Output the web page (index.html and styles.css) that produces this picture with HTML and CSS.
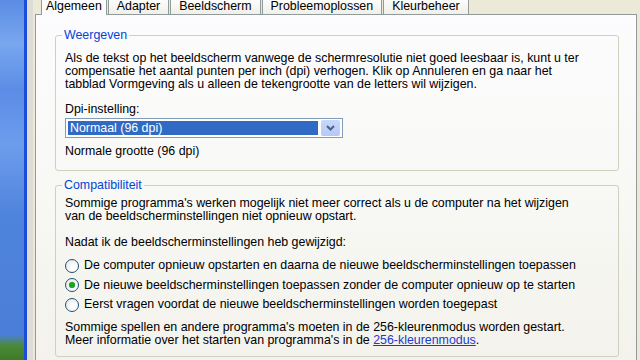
FILE: index.html
```html
<!DOCTYPE html>
<html lang="nl">
<head>
  <meta charset="UTF-8" />
  <meta name="viewport" content="width=device-width, initial-scale=1" />
  <title>Eigenschappen voor Beeldscherm - Algemeen</title>
  <link rel="stylesheet" href="styles.css">
</head>
<body>
  <div class="screen">
    <div class="desktop"></div>
    <div class="window">
      <div class="tabs">
        <div class="tab active">Algemeen</div>
        <div class="tab">Adapter</div>
        <div class="tab">Beeldscherm</div>
        <div class="tab">Probleemoplossen</div>
        <div class="tab">Kleurbeheer</div>
      </div>

      <div class="panel">
        <fieldset class="group group-display">
          <legend>Weergeven</legend>
          <p>Als de tekst op het beeldscherm vanwege de schermresolutie niet goed leesbaar is, kunt u ter<br />
            compensatie het aantal punten per inch (dpi) verhogen. Klik op Annuleren en ga naar het<br />
            tabblad Vormgeving als u alleen de tekengrootte van de letters wil wijzigen.</p>

          <label class="field-label">Dpi-instelling:</label>
          <div class="combo">
            <span class="combo-value">Normaal (96 dpi)</span>
            <span class="combo-btn">
              <svg width="9" height="6" viewBox="0 0 9 6"><path d="M1 1 L4.5 4.5 L8 1" fill="none" stroke="#4d6185" stroke-width="2"/></svg>
            </span>
          </div>
          <p class="size-note">Normale grootte (96 dpi)</p>
        </fieldset>

        <fieldset class="group group-compat">
          <legend>Compatibiliteit</legend>
          <p>Sommige programma's werken mogelijk niet meer correct als u de computer na het wijzigen<br />
            van de beeldscherminstellingen niet opnieuw opstart.</p>

          <p class="question">Nadat ik de beeldscherminstellingen heb gewijzigd:</p>

          <div class="options">
            <label class="option"><span class="radio"></span>De computer opnieuw opstarten en daarna de nieuwe beeldscherminstellingen toepassen</label>
            <label class="option"><span class="radio checked"></span>De nieuwe beeldscherminstellingen toepassen zonder de computer opnieuw op te starten</label>
            <label class="option"><span class="radio"></span>Eerst vragen voordat de nieuwe beeldscherminstellingen worden toegepast</label>
          </div>

          <p class="footnote">Sommige spellen en andere programma's moeten in de 256-kleurenmodus worden gestart.<br />
            Meer informatie over het starten van programma's in de <a href="#">256-kleurenmodus</a>.</p>
        </fieldset>
      </div>
    </div>
  </div>
</body>
</html>
```

FILE: styles.css
```css
* {
  box-sizing: border-box;
}
body {
  margin: 0;
  font-family: "Liberation Sans", Arial, sans-serif;
  font-size: 12.4px;
  line-height: 13px;
  color: #000;
  background-color: #ece9d8;
}
p {
  margin: 0;
}
.screen {
  display: flex;
  width: 640px;
  height: 360px;
  overflow: hidden;
}
.desktop {
  width: 27px;
  background: linear-gradient(to bottom, #5a8ce4 0%, #79a6ee 12%, #5b8de6 25%, #6d9cec 40%, #4f84dc 60%, #4a7ed8 93%, #4c8a36 96%, #3f7a2a 100%);
  border-right: 3px solid #1b4ddb;
  flex: none;
}
.window {
  flex: 1;
  display: flex;
  flex-direction: column;
  padding-left: 2px;
  border-left: 6px solid #dedcd4;
  background-color: #ece9d8;
}
.tabs {
  display: flex;
  height: 15px;
  margin-left: 6px;
  margin-bottom: -1px;
  position: relative;
  z-index: 1;
}
.tab {
  padding: 0 8px;
  height: 14px;
  line-height: 12px;
  background: linear-gradient(to bottom, #fcfcfb, #f0efe9);
  border: 1px solid #919b9c;
  border-top: none;
  border-bottom: none;
  margin-right: 1px;
}
.tab.active {
  height: 15px;
  padding: 0 4px;
  background: #fcfcfe;
}
.panel {
  flex: 1;
  width: 602px;
  border: 1px solid #919b9c;
  border-bottom: none;
  background: linear-gradient(to bottom, #fcfcfe 0%, #f7f7f3 60%, #f3f2ec 100%);
  padding: 14px 17px 0 19px;
}
.group {
  margin: 0;
  padding: 10px 10px 12px 9px;
  border: 1px solid #d0d0bf;
  border-radius: 3px;
}
.group legend {
  color: #0046d5;
  padding: 0 2px;
  margin-left: -3px;
  line-height: 13px;
}
.group-compat {
  margin-top: 8px;
  padding-top: 5px;
  padding-bottom: 9px;
}
.field-label {
  display: block;
  margin-top: 12px;
}
.combo {
  display: flex;
  width: 278px;
  height: 20px;
  margin-top: 2px;
  padding: 2px;
  border: 1px solid #7f9db9;
  background: #fff;
}
.combo-value {
  flex: 1;
  background: #316ac5;
  color: #fff;
  padding-left: 2px;
  line-height: 14px;
}
.combo-btn {
  width: 19px;
  margin-left: 3px;
  margin-top: -1px;
  margin-bottom: -1px;
  background: linear-gradient(to bottom, #c8d8fb, #b4c9f6);
  border-radius: 2px;
  display: flex;
  align-items: center;
  justify-content: center;
}
.size-note {
  margin-top: 7px;
}
.question {
  margin-top: 13px;
}
.options {
  margin-top: 7px;
}
.option {
  display: flex;
  align-items: center;
  height: 19.5px;
}
.radio {
  width: 14px;
  height: 14px;
  margin-right: 5px;
  border: 1px solid #1c5180;
  border-radius: 50%;
  background: radial-gradient(circle at 65% 65%, #fff 20%, #e4e3dc 100%);
  flex: none;
  display: flex;
  align-items: center;
  justify-content: center;
}
.radio.checked::after {
  content: "";
  width: 6px;
  height: 6px;
  border-radius: 50%;
  background: #21a121;
  box-shadow: 0 0 1px #5ec45e;
}
.footnote {
  margin-top: 6px;
}
.footnote a {
  color: #1a3cc8;
}
```
